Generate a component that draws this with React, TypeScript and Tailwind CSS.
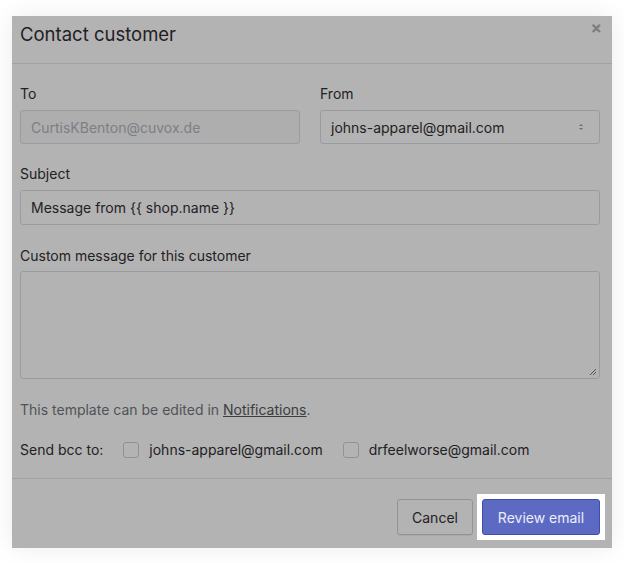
import React from "react";

export default function App() {
  return (
    <div
      className="w-[624px] h-[563px] bg-white pt-4 pl-3"
      style={{ fontFamily: "Inter, 'Liberation Sans', sans-serif" }}
    >
      <div className="w-[600px] h-[532px] bg-[#b3b3b3] shadow-[0_0_24px_rgba(0,0,0,0.08)] flex flex-col text-[#1f2124]">
        {/* header */}
        <div className="relative h-12 border-b border-[#a2a2a2] px-2">
          <h1 className="pt-[6px] text-[18.5px] leading-6">Contact customer</h1>
          <span className="absolute right-[10px] top-0 text-[#7e7e7e] text-[17px] font-bold">×</span>
        </div>

        {/* body */}
        <div className="pl-2 pr-3 pt-[20px] flex flex-col">
          <div className="flex gap-5">
            <div className="flex-1">
              <div className="text-[14px] leading-5 mb-[6px]">To</div>
              <div className="h-[34px] rounded-[3px] border border-[#989ca2] bg-[#aeaeae] px-[10px] flex items-center text-[14px] text-[#7b7f86]">
                CurtisKBenton@cuvox.de
              </div>
            </div>
            <div className="flex-1">
              <div className="text-[14px] leading-5 mb-[6px]">From</div>
              <div className="h-[34px] rounded-[3px] border border-[#989ca2] bg-[#b3b3b3] px-[10px] flex items-center justify-between text-[14px]">
                <span>johns-apparel@gmail.com</span>
                <svg width="8" height="10" viewBox="0 0 8 10" className="mr-[4px]">
                  <path d="M2 4 L4 2 L6 4 Z" fill="#6b6f75" />
                  <path d="M2 6 L4 8 L6 6 Z" fill="#6b6f75" />
                </svg>
              </div>
            </div>
          </div>

          <div className="mt-[20px] text-[14px] leading-5 mb-[6px]">Subject</div>
          <div className="h-[35px] rounded-[3px] border border-[#989ca2] px-[10px] flex items-center text-[14px]">
            Message from {"{{ shop.name }}"}
          </div>

          <div className="mt-[21px] text-[14px] leading-5 mb-[5px]">Custom message for this customer</div>
          <div className="relative h-[108px] rounded-[3px] border border-[#989ca2]">
            <svg width="8" height="8" viewBox="0 0 8 8" className="absolute right-[2px] bottom-[2px]">
              <path d="M7 1 L1 7 M7 4 L4 7" stroke="#555" strokeWidth="1" />
            </svg>
          </div>

          <div className="mt-[21px] text-[14px] leading-5 text-[#4f5358]">
            This template can be edited in <span className="underline text-[#3a3d41]">Notifications</span>.
          </div>

          <div className="mt-[20px] flex items-center text-[14px] leading-5">
            <span>Send bcc to:</span>
            <span className="ml-[20px] w-4 h-4 rounded-[3px] border border-[#8f9398]" />
            <span className="ml-[10px]">johns-apparel@gmail.com</span>
            <span className="ml-[20px] w-4 h-4 rounded-[3px] border border-[#8f9398]" />
            <span className="ml-[10px]">drfeelworse@gmail.com</span>
          </div>
        </div>

        {/* footer */}
        <div className="mt-auto border-t border-[#a2a2a2] h-[70px] flex items-start justify-end gap-[4px] pr-3 pt-[15px]">
          <button className="mt-[5px] h-9 w-[76px] rounded-[3px] border border-[#909499] bg-[#b3b3b3] text-[14px] text-[#1f2124] shadow-[0_1px_0_rgba(0,0,0,0.05)]">
            Cancel
          </button>
          <div className="bg-white p-[5px] -mr-[5px]">
            <button className="h-9 w-[118px] rounded-[3px] bg-[#5c6ac4] border border-[#3f4eae] text-[14px] text-[#eceef9]">
              Review email
            </button>
          </div>
        </div>
      </div>
    </div>
  );
}
